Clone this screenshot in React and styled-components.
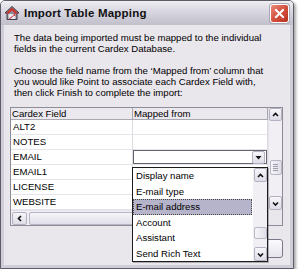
import React from 'react';
import styled, { createGlobalStyle } from 'styled-components';

const Global = createGlobalStyle`
  html, body { margin: 0; padding: 0; background: #ffffff; }
  body { font-family: "Liberation Sans", Arial, sans-serif; color: #000; }
  * { box-sizing: border-box; }
`;

const Window = styled.div`
  width: 294px;
  height: 269px;
  border: 1px solid #5e5c68;
  border-radius: 5px 5px 0 0;
  background: #cfcdd7;
  padding: 0 3px 3px;
  box-shadow: 2px 2px 3px rgba(0, 0, 0, 0.35);
  display: flex;
  flex-direction: column;
`;

const TitleBar = styled.div`
  height: 24px;
  margin: 0 -3px;
  padding: 0 4px 0 3px;
  border-radius: 4px 4px 0 0;
  background: linear-gradient(#f0eff4 0%, #dcdae3 35%, #cdcbd6 70%, #c1bfca 100%);
  display: flex;
  align-items: center;
  gap: 4px;
`;

const Title = styled.div`
  flex: 1;
  font-size: 11.5px;
  font-weight: bold;
  color: #111;
  letter-spacing: 0.2px;
`;

const CloseButton = styled.div`
  width: 19px;
  height: 19px;
  border: 1px solid #fff;
  border-radius: 3px;
  background: linear-gradient(135deg, #ec8a7a 0%, #d4503e 50%, #b8301e 100%);
  display: flex;
  align-items: center;
  justify-content: center;
  box-shadow: 0 0 0 1px #a8a6b2;
`;

const Body = styled.div`
  flex: 1;
  background: #e9e6ec;
  padding: 6.5px 7px 0 6px;
  display: flex;
  flex-direction: column;
`;

const Para = styled.p`
  margin: 0 0 ${(p) => p.$gap}px;
  padding-left: 4px;
  font-size: 9.6px;
  line-height: 11px;
  white-space: nowrap;
`;

const GridArea = styled.div`
  position: relative;
`;

const Grid = styled.div`
  width: 273px;
  height: 119px;
  border: 1px solid #8e8c98;
  background: #ffffff;
  display: grid;
  grid-template-columns: 257px 14px;
  grid-template-rows: 12px 90px 15px;
  grid-template-areas:
    'head vs'
    'rows vs'
    'hs corner';
`;

const Header = styled.div`
  grid-area: head;
  display: grid;
  grid-template-columns: 122px 135px;
`;

const HeaderCell = styled.div`
  background: #ebe8ee;
  border-right: 1px solid #a9a7b2;
  border-bottom: 1px solid #a9a7b2;
  font-size: 9.6px;
  line-height: 11px;
  padding-left: 1px;
  white-space: nowrap;
  overflow: hidden;
`;

const Rows = styled.div`
  grid-area: rows;
  display: flex;
  flex-direction: column;
`;

const Row = styled.div`
  height: 15px;
  display: grid;
  grid-template-columns: 122px 135px;
`;

const Cell = styled.div`
  position: relative;
  border-bottom: 1px solid #e6e4ea;
  border-right: 1px solid #dddbe2;
  font-size: 9.6px;
  line-height: 14px;
  padding-left: 2px;
  white-space: nowrap;
`;

const Combo = styled.div`
  position: absolute;
  inset: 0 0 0 0;
  border: 1px solid #66646e;
  background: #fff;
  display: flex;
  justify-content: flex-end;
  align-items: center;
  padding-right: 1px;
`;

const ArrowButton = styled.div`
  width: ${(p) => p.$w || 13}px;
  height: ${(p) => p.$h || 13}px;
  border: 1px solid #b4b2c0;
  border-radius: 2px;
  background: linear-gradient(#f7f6fa, #dedce6);
  display: flex;
  align-items: center;
  justify-content: center;
  flex-shrink: 0;
`;

const VScroll = styled.div`
  grid-area: vs;
  background: #f1eff4;
  border-left: 1px solid #e4e2e8;
  display: flex;
  flex-direction: column;
  align-items: center;
`;

const Thumb = styled.div`
  width: ${(p) => p.$w}px;
  height: ${(p) => p.$h}px;
  margin-top: ${(p) => p.$top}px;
  border: 1px solid #b8b6c4;
  border-radius: 2px;
  background: linear-gradient(90deg, #f6f5f9, #e0dee8);
  display: flex;
  flex-direction: column;
  align-items: center;
  justify-content: center;
  gap: 1px;
`;

const Grip = styled.div`
  width: 5px;
  height: 1px;
  background: #9e9cac;
`;

const Spacer = styled.div`
  flex: 1;
`;

const HScroll = styled.div`
  grid-area: hs;
  background: #f1eff4;
  border-top: 1px solid #e4e2e8;
  display: flex;
  align-items: center;
  padding-left: 1px;
  gap: 2px;
`;

const HThumb = styled.div`
  width: 210px;
  height: 13px;
  border: 1px solid #b8b6c4;
  border-radius: 2px;
  background: linear-gradient(#f6f5f9, #e0dee8);
`;

const Corner = styled.div`
  grid-area: corner;
  background: #e9e6ec;
`;

const DropList = styled.div`
  position: absolute;
  left: 122px;
  top: 60px;
  width: 136px;
  height: 95px;
  border: 1px solid #1c1c1c;
  background: #fff;
  display: flex;
  z-index: 2;
  box-shadow: 1px 1px 0 rgba(0, 0, 0, 0.25);
`;

const Items = styled.div`
  flex: 1;
  display: flex;
  flex-direction: column;
  padding-right: 1px;
`;

const Item = styled.div`
  flex: 1;
  font-size: 9.6px;
  display: flex;
  align-items: center;
  padding-left: 3px;
  white-space: nowrap;
  background: ${(p) => (p.$selected ? '#b6b4ca' : 'transparent')};
  outline: ${(p) => (p.$selected ? '1px dotted #444' : 'none')};
  outline-offset: -1px;
`;

const ListScroll = styled.div`
  width: 14px;
  background: #f1eff4;
  display: flex;
  flex-direction: column;
  align-items: center;
`;

const Footer = styled.div`
  display: flex;
  justify-content: flex-end;
  gap: 6px;
  padding-top: 13px;
`;

const Button = styled.div`
  width: 70px;
  height: 19px;
  border: 1px solid #7a7888;
  border-radius: 3px;
  background: linear-gradient(#fbfbfd, #e6e4ec);
`;

const Chevron = ({ dir }) => {
  const pts = {
    up: '2,6 4.5,3.5 7,6',
    down: '2,3.5 4.5,6 7,3.5',
    left: '6,2 3.5,4.5 6,7',
  }[dir];
  return (
    <svg width="9" height="9" viewBox="0 0 9 9">
      <polyline points={pts} fill="none" stroke="#111" strokeWidth="1.6" />
    </svg>
  );
};

const DownTriangle = () => (
  <svg width="9" height="9" viewBox="0 0 9 9">
    <polygon points="1.5,3 7.5,3 4.5,6.5" fill="#111" />
  </svg>
);

const AppIcon = () => (
  <svg width="16" height="16" viewBox="0 0 16 16">
    <polygon points="1,8 8,1.5 15,8 13,8 13,14.5 3,14.5 3,8" fill="#8c8a94" stroke="#3c3a44" strokeWidth="1" />
    <polygon points="2.5,7.5 8,2.8 13.5,7.5 12,9 8,5.5 4,9" fill="#d0302a" />
    <rect x="4.5" y="9" width="7" height="5" fill="#e8e6ee" />
    <polygon points="5,13.5 10.5,9.5 8.5,9 11.5,8.5 11,11.5 10,10.5 6,14" fill="#c42822" />
  </svg>
);

const CloseX = () => (
  <svg width="11" height="11" viewBox="0 0 11 11">
    <path d="M2 2 L9 9 M9 2 L2 9" stroke="#fff" strokeWidth="2" strokeLinecap="square" />
  </svg>
);

const rows = ['ALT2', 'NOTES', 'EMAIL', 'EMAIL1', 'LICENSE', 'WEBSITE'];
const options = ['Display name', 'E-mail type', 'E-mail address', 'Account', 'Assistant', 'Send Rich Text'];

export default function App() {
  return (
    <>
      <Global />
      <Window>
        <TitleBar>
          <AppIcon />
          <Title>Import Table Mapping</Title>
          <CloseButton>
            <CloseX />
          </CloseButton>
        </TitleBar>
        <Body>
          <Para $gap={11}>
            The data being imported must be mapped to the individual
            <br />
            fields in the current Cardex Database.
          </Para>
          <Para $gap={9.5}>
            Choose the field name from the ‘Mapped from’ column that
            <br />
            you would like Point to associate each Cardex Field with,
            <br />
            then click Finish to complete the import:
          </Para>
          <GridArea>
            <Grid>
              <Header>
                <HeaderCell>Cardex Field</HeaderCell>
                <HeaderCell>Mapped from</HeaderCell>
              </Header>
              <Rows>
                {rows.map((r) => (
                  <Row key={r}>
                    <Cell>{r}</Cell>
                    <Cell>
                      {r === 'EMAIL' && (
                        <Combo>
                          <ArrowButton>
                            <DownTriangle />
                          </ArrowButton>
                        </Combo>
                      )}
                    </Cell>
                  </Row>
                ))}
              </Rows>
              <VScroll>
                <ArrowButton $w={13} $h={13}>
                  <Chevron dir="up" />
                </ArrowButton>
                <Thumb $w={12} $h={15} $top={39}>
                  <Grip />
                  <Grip />
                  <Grip />
                  <Grip />
                </Thumb>
                <Spacer />
                <ArrowButton $w={13} $h={14}>
                  <Chevron dir="down" />
                </ArrowButton>
              </VScroll>
              <HScroll>
                <ArrowButton $w={15} $h={13}>
                  <Chevron dir="left" />
                </ArrowButton>
                <HThumb />
              </HScroll>
              <Corner />
            </Grid>
            <DropList>
              <Items>
                {options.map((o) => (
                  <Item key={o} $selected={o === 'E-mail address'}>
                    {o}
                  </Item>
                ))}
              </Items>
              <ListScroll>
                <ArrowButton $w={13} $h={14}>
                  <Chevron dir="up" />
                </ArrowButton>
                <Thumb $w={13} $h={12} $top={45} />
                <Spacer />
                <ArrowButton $w={13} $h={14}>
                  <Chevron dir="down" />
                </ArrowButton>
              </ListScroll>
            </DropList>
          </GridArea>
          <Footer>
            <Button />
            <Button />
          </Footer>
        </Body>
      </Window>
    </>
  );
}
